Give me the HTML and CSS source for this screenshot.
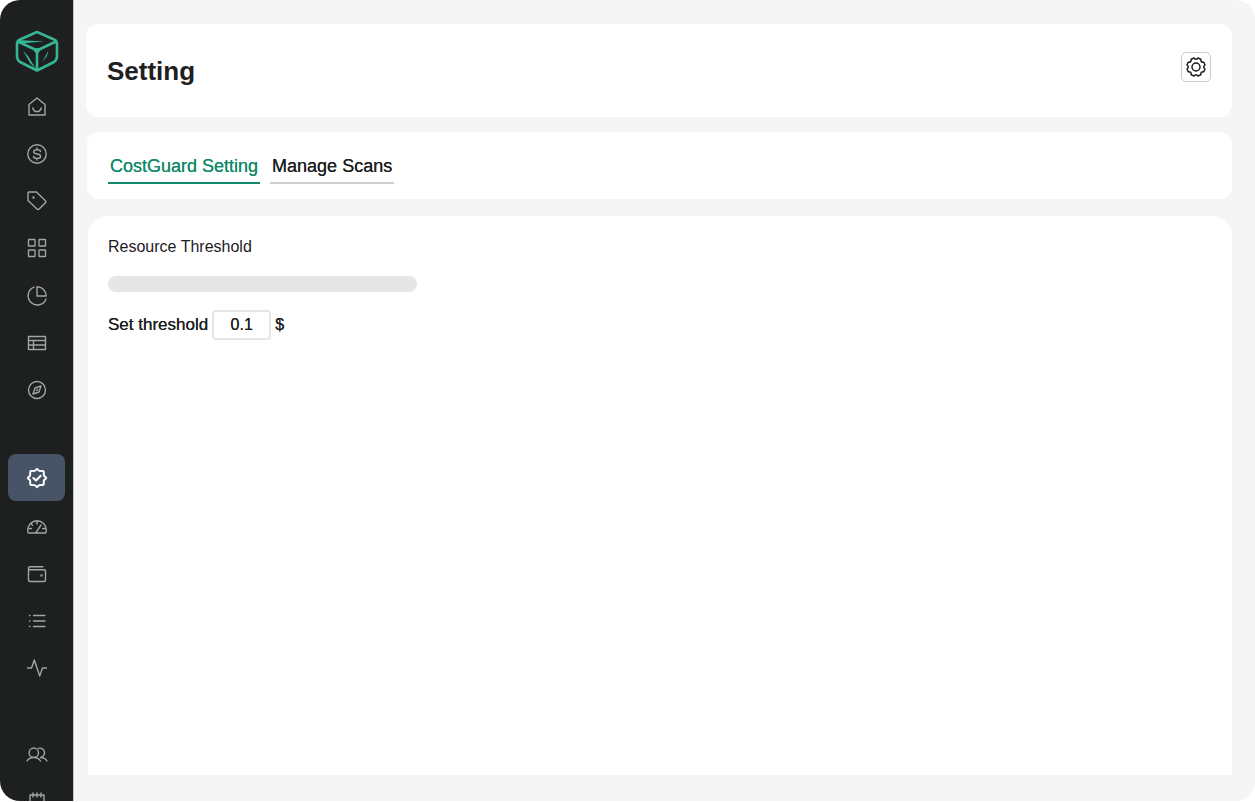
FILE: index.html
```html
<!DOCTYPE html>
<html lang="en">
<head>
    <meta charset="utf-8">
    <meta name="viewport" content="width=device-width, initial-scale=1.0">
    <title>Setting</title>
    <link rel="stylesheet" href="styles.css">
</head>
<body>
    <div class="app">
        <nav class="sidebar" aria-label="Main">
            <a class="logo" href="#" aria-label="Home page">
                <svg width="44" height="42" viewBox="0 0 44 42">
                    <path d="M22 2 L39 9.500 Q42 11 42 14 V26 Q42 30 39 32 L22 40.500 L5 32 Q2 30 2 26 V14 Q2 11 5 9.500 Z M3 11.500 L22 20.500 L41 11.500 M22 20.500 V40" fill="none" stroke="#36b594" stroke-width="2.600" stroke-linejoin="round"/>
                    <path d="M3 10 L29.500 11.600 L5 13.500 Z M8 20.500 L13 26 L21 39 L15 33 Z M33.500 20 L32 26 L27.500 32 Z M17 18 H27 L23.500 23 H20.500 Z" fill="#36b594"/>
                </svg>
            </a>

            <div class="group group-main">
                <a href="#" aria-label="Home">
                    <svg class="icon" viewBox="0 0 24 24"><path d="M4 9.500 L12 3 L20 9.500 V20 H4 Z M7.800 13 Q8.500 16.600 12 16.600 Q15.500 16.600 16.200 13"/></svg>
                </a>
                <a href="#" aria-label="Cost">
                    <svg class="icon" viewBox="0 0 24 24"><circle cx="12" cy="12" r="9.200"/><path d="M15.500 9.500 Q15.300 7.700 12 7.700 Q8.700 7.700 8.700 9.800 Q8.700 11.600 12 12 Q15.600 12.400 15.600 14.400 Q15.600 16.400 12 16.400 Q8.600 16.400 8.500 14.400 M12 6 V7.700 M12 16.400 V18"/></svg>
                </a>
                <a href="#" aria-label="Tags">
                    <svg class="icon" viewBox="0 0 24 24"><path d="M3 4 Q3 3 4 3 H11.500 L20.400 11.700 Q21.400 12.700 20.400 13.700 L14.200 20 Q13 21 12 20 L3 11.500 Z"/><circle cx="8.500" cy="8.500" r="0.500"/></svg>
                </a>
                <a href="#" aria-label="Dashboard">
                    <svg class="icon" viewBox="0 0 24 24"><rect x="3.500" y="3.500" width="6.500" height="6.500" rx="0.500"/><rect x="14" y="3.500" width="6.500" height="6.500" rx="0.500"/><rect x="3.500" y="14" width="6.500" height="6.500" rx="0.500"/><rect x="14" y="14" width="6.500" height="6.500" rx="0.500"/></svg>
                </a>
                <a href="#" aria-label="Reports">
                    <svg class="icon" viewBox="0 0 24 24"><path d="M9 3.200 A9.200 9.200 0 1 0 20.900 15.200 M12 2.800 A9.200 9.200 0 0 1 21.200 12 H12 Z"/></svg>
                </a>
                <a href="#" aria-label="Tables">
                    <svg class="icon" viewBox="0 0 24 24"><path d="M3.500 5.500 H20.500 V18.500 H3.500 Z M3.500 9.500 H20.500 M3.500 14 H20.500 M8.500 9.500 V18.500"/></svg>
                </a>
                <a href="#" aria-label="Explore">
                    <svg class="icon" viewBox="0 0 24 24"><circle cx="12" cy="12" r="8.500"/><path d="M16 8 L14 14 L8 16 L10 10 Z M11.500 12.500 L12.500 11.500"/></svg>
                </a>
            </div>

            <div class="group">
                <a class="active" href="#" aria-label="CostGuard">
                    <svg class="icon" viewBox="0 0 24 24"><path d="M12 2.800 Q13.500 5 15 5 Q18.800 4.500 18.800 6 Q18.500 9.500 19.300 10.200 Q21.200 11.500 21.200 12 Q21.200 12.500 19.300 13.800 Q18.500 14.500 18.800 18 Q18.800 19.500 15 19 Q13.500 19 12 21.200 Q10.500 19 9 19 Q5.200 19.500 5.200 18 Q5.500 14.500 4.700 13.800 Q2.800 12.500 2.800 12 Q2.800 11.500 4.700 10.200 Q5.500 9.500 5.200 6 Q5.200 4.500 9 5 Q10.500 5 12 2.800 Z M8.300 12 L11 14.500 L15.700 9.800"/></svg>
                </a>
                <a href="#" aria-label="Performance">
                    <svg class="icon" viewBox="0 0 24 24"><path d="M3.500 18 Q2.700 18 2.700 15 A9.300 9.300 0 0 1 21.300 15 Q21.300 18 20.500 18 Z M12 6 V9 M3 13.500 H6.500 M17.500 13.500 H21 M5.800 8.500 L7.500 10.200 M11 17.500 L16 10"/></svg>
                </a>
                <a href="#" aria-label="Wallet">
                    <svg class="icon" viewBox="0 0 24 24"><path d="M18 4.800 H5 Q3.500 4.800 3.500 6.300 V18 Q3.500 19.500 5 19.500 H19 Q20.500 19.500 20.500 18 V9 Q20.500 7.800 19 7.800 H5 Q3.500 7.800 3.500 6.300"/><circle cx="16.500" cy="13.500" r="0.500"/></svg>
                </a>
                <a href="#" aria-label="List">
                    <svg class="icon" viewBox="0 0 24 24"><path d="M8.500 6.500 H20 M8.500 12 H20 M8.500 17.500 H20 M4.500 6.500 H5 M4.500 12 H5 M4.500 17.500 H5"/></svg>
                </a>
                <a href="#" aria-label="Activity">
                    <svg class="icon" viewBox="0 0 24 24"><path d="M2.500 12 H6.500 L9.300 4 L14.700 20 L17.500 12 H21.500"/></svg>
                </a>
            </div>

            <div class="group">
                <a href="#" aria-label="Users">
                    <svg class="icon" viewBox="0 0 24 24"><circle cx="8.800" cy="9.700" r="4.700"/><path d="M2 18 Q4 14.500 8.800 14.500 Q13.500 14.500 15.500 18 M13.300 5.400 A4.700 4.700 0 1 1 15.500 14.500 Q20 14.500 22 18"/></svg>
                </a>
                <a href="#" aria-label="Calendar">
                    <svg class="icon" viewBox="0 0 24 24"><path d="M5 5 H19 V21 H5 Z M8 3 V7 M12 3 V7 M16 3 V7 M9 12 H15"/></svg>
                </a>
            </div>
        </nav>

        <main class="main">
            <header class="card page-header">
                <h1>Setting</h1>
                <button type="button" class="gear-button" aria-label="Settings">
                    <svg width="22" height="22" viewBox="0 0 22 22">
                        <path d="M13 2 L15.800 3.200 Q15.500 6.500 18.800 6.200 L20 9 Q17.400 11 20 13 L18.800 15.800 Q15.500 15.500 15.800 18.800 L13 20 Q11 17.400 9 20 L6.200 18.800 Q6.500 15.500 3.200 15.800 L2 13 Q4.600 11 2 9 L3.200 6.200 Q6.500 6.500 6.200 3.200 L9 2 Q11 4.600 13 2 Z"/>
                        <circle cx="11" cy="11" r="4"/>
                    </svg>
                </button>
            </header>

            <div class="card tabs">
                <a class="tab selected" href="#">CostGuard Setting</a>
                <a class="tab" href="#">Manage Scans</a>
            </div>

            <section class="content">
                <h2>Resource Threshold</h2>
                <div class="bar"></div>
                <div class="threshold">
                    <label for="threshold">Set threshold</label>
                    <input type="text" id="threshold" name="threshold" value="0.1">
                    <span>$</span>
                </div>
            </section>
        </main>
    </div>
</body>
</html>
```
FILE: styles.css
```css
* {
    box-sizing: border-box;
}
body {
    margin: 0;
    background-color: #ffffff;
    color: #1d201f;
    font-family: "Liberation Sans", Arial, Helvetica, sans-serif;
}
.app {
    display: flex;
    height: calc(100vh - 1px);
    border-radius: 20px;
    overflow: hidden;
    background-color: #f5f5f5;
}

/* Sidebar */
.sidebar {
    flex: none;
    display: flex;
    flex-direction: column;
    width: 74px;
    padding: 30px 8px 0;
    border-right: 1px solid #c4c4c4;
    background-color: #1d201f;
    overflow: hidden;
}
.logo {
    flex: none;
    height: 53px;
    text-align: center;
}
.group {
    flex: none;
    display: flex;
    flex-direction: column;
    margin-bottom: 40px;
}
.group-main {
    height: 331px;
    justify-content: space-between;
}
.group a {
    display: flex;
    align-items: center;
    justify-content: center;
    height: 47px;
    color: #a3a5a4;
}
.group .active {
    margin-bottom: 2px;
    border-radius: 8px;
    background-color: #475467;
    color: #ffffff;
}
.icon {
    width: 24px;
    height: 24px;
    fill: none;
    stroke: currentColor;
    stroke-width: 1.4;
    stroke-linejoin: round;
    stroke-linecap: round;
}
.active .icon {
    stroke-width: 2;
}

/* Page */
.main {
    flex: 1;
    display: flex;
    flex-direction: column;
    padding: 24px 23px 26px 12px;
}
.card {
    border-radius: 12px;
    background-color: #ffffff;
}
.page-header {
    display: flex;
    justify-content: space-between;
    align-items: flex-start;
    padding: 28px 21px;
    margin-bottom: 15px;
}
h1 {
    margin: 0;
    padding-top: 1px;
    font-size: 26px;
    line-height: 36px;
}
.gear-button {
    display: flex;
    align-items: center;
    justify-content: center;
    width: 30px;
    height: 30px;
    padding: 0;
    border: 1px solid #cccccc;
    border-radius: 5px;
    background-color: #ffffff;
}
.gear-button svg {
    flex: none;
    fill: none;
    stroke: #1d201f;
    stroke-width: 1.5;
    stroke-linejoin: round;
}
.tabs {
    display: flex;
    gap: 10px;
    padding: 21px 21px 15px;
    margin: 0 0 17px 1px;
}
.tab {
    padding: 0 2px 3px;
    border-bottom: 2px solid #d0d0d0;
    color: #1d201f;
    font-size: 18px;
    line-height: 26px;
    text-decoration: none;
    text-shadow: 0 0 0 currentColor;
}
.tab.selected {
    border-color: #128a6a;
    color: #128a6a;
}
.content {
    flex: 1;
    padding: 20px;
    margin-left: 2px;
    border-radius: 20px 20px 0 0;
    background-color: #ffffff;
}
h2 {
    margin: 0 0 18px;
    font-size: 16px;
    font-weight: normal;
    line-height: 22px;
}
.bar {
    max-width: 309px;
    height: 16px;
    margin-bottom: 18px;
    border-radius: 8px;
    background-color: #e6e6e6;
}
.threshold {
    display: flex;
    align-items: center;
    gap: 4px;
    font-size: 16px;
    text-shadow: 0 0 0 currentColor;
}
.threshold input {
    width: 59px;
    height: 30px;
    padding: 0;
    border: 2px solid #e6e6e6;
    border-radius: 4px;
    color: inherit;
    font: inherit;
    text-align: center;
    text-shadow: inherit;
}
.threshold label {
    font-size: 17px;
}
```
